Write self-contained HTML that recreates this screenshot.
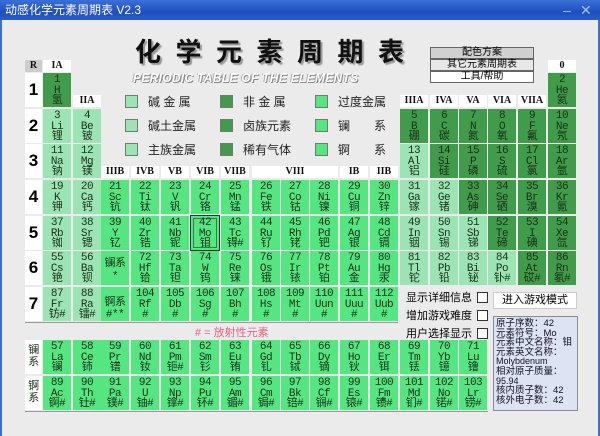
<!DOCTYPE html>
<html><head><meta charset="utf-8"><style>
*{margin:0;padding:0;box-sizing:border-box}
body{width:600px;height:436px;overflow:hidden;background:#ebebeb;font-family:"Liberation Sans","Noto Sans CJK SC",sans-serif;position:relative}
.tb{position:absolute;left:0;top:0;width:600px;height:20px;background:linear-gradient(#3a6fd8,#1f4fbf 60%,#2a5ccc);color:#fff;font-size:12px;line-height:20px;padding-left:5px}
.tb span{position:absolute;top:0;font-size:14px;color:#9fc0ff}
.c{position:absolute;width:28px;height:34px;text-align:center;font-family:"Liberation Mono","Noto Sans CJK SC",monospace;font-size:11px;line-height:10.5px;padding-top:2px;color:#183018;letter-spacing:-0.5px}
.L{background:#9de4b4}.T{background:#55e681}.D{background:#409c4b}
.h{position:absolute;height:12px;background:#fff;font:bold 10px/12px "Liberation Serif",serif;text-align:center;color:#111}
.p{position:absolute;left:25px;width:17px;height:34px;background:#fff;font:bold 17px/34px "Liberation Sans",sans-serif;text-align:center}
.sq{position:absolute;width:13px;height:13px;border:1px solid #777}
.lg{position:absolute;font-size:12px;line-height:14px;color:#222;font-family:"Liberation Sans","Noto Sans CJK SC",sans-serif}
.btn{position:absolute;left:430px;width:104px;height:12px;border:1px solid #666;font-size:10px;line-height:10px;text-align:center}
.ck{position:absolute;left:406px;font-size:11px;line-height:14px;width:90px}
.ck i{position:absolute;left:71px;top:1px;width:11px;height:11px;border:1px solid #333;background:#fff}
</style></head><body>
<div class="tb">动感化学元素周期表 V2.3<span style="left:563px">–</span><span style="left:580px">✕</span></div>
<div style="position:absolute;left:0;top:20px;width:2px;height:416px;background:#3a6fd8"></div>
<div style="position:absolute;right:0;top:20px;width:2px;height:416px;background:#3a6fd8"></div>

<div style="position:absolute;left:135px;top:36px;font:bold 26px/30px 'Noto Sans CJK SC',sans-serif;letter-spacing:14.5px;color:#111;text-shadow:2px 2px 1px #999">化学元素周期表</div>
<div style="position:absolute;left:133px;top:72px;font:italic bold 12px/13px 'Liberation Sans',sans-serif;color:#fff;text-shadow:1px 1px 0 #888,-1px 0 0 #aaa;letter-spacing:0.3px">PERIODIC TABLE OF THE ELEMENTS</div>

<div class="btn" style="top:47px;background:#d0d0d0">配色方案</div>
<div class="btn" style="top:59px;background:#e8e8e8">其它元素周期表</div>
<div class="btn" style="top:71px;background:#fff">工具/帮助</div>

<div class="h" style="left:25px;top:60px;width:17px;background:#ccc">R</div>
<div class="h" style="left:43px;top:60px;width:28px">IA</div>
<div class="h" style="left:548px;top:60px;width:28px">0</div>
<div class="h" style="left:73px;top:95px;width:28px">IIA</div>
<div class="h" style="left:400px;top:95px;width:28px">IIIA</div>
<div class="h" style="left:430px;top:95px;width:28px">IVA</div>
<div class="h" style="left:459px;top:95px;width:28px">VA</div>
<div class="h" style="left:488px;top:95px;width:28px">VIA</div>
<div class="h" style="left:518px;top:95px;width:28px">VIIA</div>
<div class="h" style="left:101px;top:166px;width:28px">IIIB</div>
<div class="h" style="left:131px;top:166px;width:28px">IVB</div>
<div class="h" style="left:161px;top:166px;width:28px">VB</div>
<div class="h" style="left:191px;top:166px;width:28px">VIB</div>
<div class="h" style="left:221px;top:166px;width:28px">VIIB</div>
<div class="h" style="left:252px;top:166px;width:86px">VIII</div>
<div class="h" style="left:340px;top:166px;width:28px">IB</div>
<div class="h" style="left:370px;top:166px;width:28px">IIB</div>

<div class="p" style="top:73px">1</div><div class="p" style="top:109px">2</div><div class="p" style="top:144px">3</div><div class="p" style="top:180px">4</div><div class="p" style="top:216px">5</div><div class="p" style="top:251px">6</div><div class="p" style="top:287px">7</div>

<div class="sq" style="left:125px;top:95px;background:#9de4b4"></div><div class="lg" style="left:148px;top:95px">碱 金 属</div>
<div class="sq" style="left:125px;top:119px;background:#9de4b4"></div><div class="lg" style="left:148px;top:119px">碱土金属</div>
<div class="sq" style="left:125px;top:143px;background:#9de4b4"></div><div class="lg" style="left:148px;top:143px">主族金属</div>
<div class="sq" style="left:220px;top:95px;background:#409c4b"></div><div class="lg" style="left:243px;top:95px">非 金 属</div>
<div class="sq" style="left:220px;top:119px;background:#409c4b"></div><div class="lg" style="left:243px;top:119px">卤族元素</div>
<div class="sq" style="left:220px;top:143px;background:#409c4b"></div><div class="lg" style="left:243px;top:143px">稀有气体</div>
<div class="sq" style="left:315px;top:95px;background:#55e681"></div><div class="lg" style="left:338px;top:95px">过度金属</div>
<div class="sq" style="left:315px;top:119px;background:#55e681"></div><div class="lg" style="left:338px;top:119px">镧　　系</div>
<div class="sq" style="left:315px;top:143px;background:#55e681"></div><div class="lg" style="left:338px;top:143px">锕　　系</div>

<div class="c D" style="left:43px;top:73px">1<br>H<br>氢</div>
<div class="c D" style="left:548px;top:73px">2<br>He<br>氦</div>
<div class="c L" style="left:43px;top:109px">3<br>Li<br>锂</div>
<div class="c L" style="left:73px;top:109px">4<br>Be<br>铍</div>
<div class="c D" style="left:400px;top:109px">5<br>B<br>硼</div>
<div class="c D" style="left:430px;top:109px">6<br>C<br>碳</div>
<div class="c D" style="left:459px;top:109px">7<br>N<br>氮</div>
<div class="c D" style="left:488px;top:109px">8<br>O<br>氧</div>
<div class="c D" style="left:518px;top:109px">9<br>F<br>氟</div>
<div class="c D" style="left:548px;top:109px">10<br>Ne<br>氖</div>
<div class="c L" style="left:43px;top:144px">11<br>Na<br>钠</div>
<div class="c L" style="left:73px;top:144px">12<br>Mg<br>镁</div>
<div class="c L" style="left:400px;top:144px">13<br>Al<br>铝</div>
<div class="c D" style="left:430px;top:144px">14<br>Si<br>硅</div>
<div class="c D" style="left:459px;top:144px">15<br>P<br>磷</div>
<div class="c D" style="left:488px;top:144px">16<br>S<br>硫</div>
<div class="c D" style="left:518px;top:144px">17<br>Cl<br>氯</div>
<div class="c D" style="left:548px;top:144px">18<br>Ar<br>氩</div>
<div class="c L" style="left:43px;top:180px">19<br>K<br>钾</div>
<div class="c L" style="left:73px;top:180px">20<br>Ca<br>钙</div>
<div class="c T" style="left:101px;top:180px">21<br>Sc<br>钪</div>
<div class="c T" style="left:131px;top:180px">22<br>Ti<br>钛</div>
<div class="c T" style="left:161px;top:180px">23<br>V<br>钒</div>
<div class="c T" style="left:191px;top:180px">24<br>Cr<br>铬</div>
<div class="c T" style="left:221px;top:180px">25<br>Mn<br>锰</div>
<div class="c T" style="left:252px;top:180px">26<br>Fe<br>铁</div>
<div class="c T" style="left:281px;top:180px">27<br>Co<br>钴</div>
<div class="c T" style="left:310px;top:180px">28<br>Ni<br>镍</div>
<div class="c T" style="left:340px;top:180px">29<br>Cu<br>铜</div>
<div class="c T" style="left:370px;top:180px">30<br>Zn<br>锌</div>
<div class="c L" style="left:400px;top:180px">31<br>Ga<br>镓</div>
<div class="c L" style="left:430px;top:180px">32<br>Ge<br>锗</div>
<div class="c D" style="left:459px;top:180px">33<br>As<br>砷</div>
<div class="c D" style="left:488px;top:180px">34<br>Se<br>硒</div>
<div class="c D" style="left:518px;top:180px">35<br>Br<br>溴</div>
<div class="c D" style="left:548px;top:180px">36<br>Kr<br>氪</div>
<div class="c L" style="left:43px;top:216px">37<br>Rb<br>铷</div>
<div class="c L" style="left:73px;top:216px">38<br>Sr<br>锶</div>
<div class="c T" style="left:101px;top:216px">39<br>Y<br>钇</div>
<div class="c T" style="left:131px;top:216px">40<br>Zr<br>锆</div>
<div class="c T" style="left:161px;top:216px">41<br>Nb<br>铌</div>
<div class="c T" style="left:191px;top:216px;outline:1px solid #333;box-shadow:inset 0 0 0 2px #55e681,inset 0 0 0 3px #3a7a46">42<br>Mo<br>钼</div>
<div class="c T" style="left:221px;top:216px">43<br>Tc<br>锝#</div>
<div class="c T" style="left:252px;top:216px">44<br>Ru<br>钌</div>
<div class="c T" style="left:281px;top:216px">45<br>Rh<br>铑</div>
<div class="c T" style="left:310px;top:216px">46<br>Pd<br>钯</div>
<div class="c T" style="left:340px;top:216px">47<br>Ag<br>银</div>
<div class="c T" style="left:370px;top:216px">48<br>Cd<br>镉</div>
<div class="c L" style="left:400px;top:216px">49<br>In<br>铟</div>
<div class="c L" style="left:430px;top:216px">50<br>Sn<br>锡</div>
<div class="c L" style="left:459px;top:216px">51<br>Sb<br>锑</div>
<div class="c D" style="left:488px;top:216px">52<br>Te<br>碲</div>
<div class="c D" style="left:518px;top:216px">53<br>I<br>碘</div>
<div class="c D" style="left:548px;top:216px">54<br>Xe<br>氙</div>
<div class="c L" style="left:43px;top:251px">55<br>Cs<br>铯</div>
<div class="c L" style="left:73px;top:251px">56<br>Ba<br>钡</div>
<div class="c T" style="left:101px;top:251px;padding-top:7px;line-height:13px">镧系<br>*</div>
<div class="c T" style="left:131px;top:251px">72<br>Hf<br>铪</div>
<div class="c T" style="left:161px;top:251px">73<br>Ta<br>钽</div>
<div class="c T" style="left:191px;top:251px">74<br>W<br>钨</div>
<div class="c T" style="left:221px;top:251px">75<br>Re<br>铼</div>
<div class="c T" style="left:252px;top:251px">76<br>Os<br>锇</div>
<div class="c T" style="left:281px;top:251px">77<br>Ir<br>铱</div>
<div class="c T" style="left:310px;top:251px">78<br>Pt<br>铂</div>
<div class="c T" style="left:340px;top:251px">79<br>Au<br>金</div>
<div class="c T" style="left:370px;top:251px">80<br>Hg<br>汞</div>
<div class="c L" style="left:400px;top:251px">81<br>Tl<br>铊</div>
<div class="c L" style="left:430px;top:251px">82<br>Pb<br>铅</div>
<div class="c L" style="left:459px;top:251px">83<br>Bi<br>铋</div>
<div class="c L" style="left:488px;top:251px">84<br>Po<br>钋#</div>
<div class="c D" style="left:518px;top:251px">85<br>At<br>砹#</div>
<div class="c D" style="left:548px;top:251px">86<br>Rn<br>氡#</div>
<div class="c L" style="left:43px;top:287px">87<br>Fr<br>钫#</div>
<div class="c L" style="left:73px;top:287px">88<br>Ra<br>镭#</div>
<div class="c T" style="left:101px;top:287px;padding-top:10px;line-height:12px">锕系<br>#**</div>
<div class="c T" style="left:131px;top:287px">104<br>Rf<br>#</div>
<div class="c T" style="left:161px;top:287px">105<br>Db<br>#</div>
<div class="c T" style="left:191px;top:287px">106<br>Sg<br>#</div>
<div class="c T" style="left:221px;top:287px">107<br>Bh<br>#</div>
<div class="c T" style="left:252px;top:287px">108<br>Hs<br>#</div>
<div class="c T" style="left:281px;top:287px">109<br>Mt<br>#</div>
<div class="c T" style="left:310px;top:287px">110<br>Uun<br>#</div>
<div class="c T" style="left:340px;top:287px">111<br>Uuu<br>#</div>
<div class="c T" style="left:370px;top:287px">112<br>Uub<br>#</div>
<div style="position:absolute;left:25px;top:322px;width:373px;height:1px;background:#999"></div>

<div style="position:absolute;left:195px;top:324px;font-size:11px;color:#f06080">#  =  放射性元素</div>

<div class="c" style="left:25px;top:340px;width:17px;background:#fff;font-size:11px;line-height:12px;padding-top:5px">镧<br>系</div>
<div class="c" style="left:25px;top:376px;width:17px;background:#fff;font-size:11px;line-height:12px;padding-top:5px">锕<br>系</div>
<div class="c T" style="left:43px;top:340px">57<br>La<br>镧</div>
<div class="c T" style="left:73px;top:340px">58<br>Ce<br>铈</div>
<div class="c T" style="left:101px;top:340px">59<br>Pr<br>镨</div>
<div class="c T" style="left:131px;top:340px">60<br>Nd<br>钕</div>
<div class="c T" style="left:161px;top:340px">61<br>Pm<br>钷#</div>
<div class="c T" style="left:191px;top:340px">62<br>Sm<br>钐</div>
<div class="c T" style="left:221px;top:340px">63<br>Eu<br>铕</div>
<div class="c T" style="left:252px;top:340px">64<br>Gd<br>钆</div>
<div class="c T" style="left:281px;top:340px">65<br>Tb<br>铽</div>
<div class="c T" style="left:310px;top:340px">66<br>Dy<br>镝</div>
<div class="c T" style="left:340px;top:340px">67<br>Ho<br>钬</div>
<div class="c T" style="left:370px;top:340px">68<br>Er<br>铒</div>
<div class="c T" style="left:400px;top:340px">69<br>Tm<br>铥</div>
<div class="c T" style="left:430px;top:340px">70<br>Yb<br>镱</div>
<div class="c T" style="left:459px;top:340px">71<br>Lu<br>镥</div>
<div class="c T" style="left:43px;top:376px">89<br>Ac<br>锕#</div>
<div class="c T" style="left:73px;top:376px">90<br>Th<br>钍#</div>
<div class="c T" style="left:101px;top:376px">91<br>Pa<br>镤#</div>
<div class="c T" style="left:131px;top:376px">92<br>U<br>铀#</div>
<div class="c T" style="left:161px;top:376px">93<br>Np<br>镎#</div>
<div class="c T" style="left:191px;top:376px">94<br>Pu<br>钚#</div>
<div class="c T" style="left:221px;top:376px">95<br>Am<br>镅#</div>
<div class="c T" style="left:252px;top:376px">96<br>Cm<br>锔#</div>
<div class="c T" style="left:281px;top:376px">97<br>Bk<br>锫#</div>
<div class="c T" style="left:310px;top:376px">98<br>Cf<br>锎#</div>
<div class="c T" style="left:340px;top:376px">99<br>Es<br>锿#</div>
<div class="c T" style="left:370px;top:376px">100<br>Fm<br>镄#</div>
<div class="c T" style="left:400px;top:376px">101<br>Md<br>钔#</div>
<div class="c T" style="left:430px;top:376px">102<br>No<br>锘#</div>
<div class="c T" style="left:459px;top:376px">103<br>Lr<br>铹#</div>
<div style="position:absolute;left:25px;top:411px;width:463px;height:1px;background:#999"></div>

<div class="ck" style="top:291px">显示详细信息<i></i></div>
<div class="ck" style="top:309px">增加游戏难度<i></i></div>
<div class="ck" style="top:327px">用户选择显示<i></i></div>
<div style="position:absolute;left:493px;top:292px;width:84px;height:17px;background:#fff;border:1px solid #ccc;font-size:11px;line-height:15px;text-align:center">进入游戏模式</div>
<div style="position:absolute;left:493px;top:316px;width:85px;height:95px;background:#dde3f2;border:1px solid #8a8a9a;font-size:9.5px;line-height:9.6px;padding:2px 0 0 2px;color:#112;white-space:nowrap;overflow:hidden">原子序数：42<br>元素符号：Mo<br>元素中文名称：钼<br>元素英文名称：<br><span style="font-size:9px">Molybdenum</span><br>相对原子质量：<br><span style="font-size:9px">95.94</span><br>核内质子数：42<br>核外电子数：42</div>
</body></html>
